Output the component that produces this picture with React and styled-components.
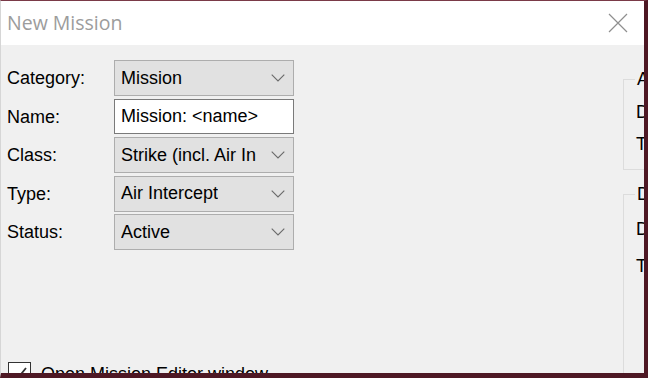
import React from 'react'
import styled, { createGlobalStyle } from 'styled-components'

const GlobalStyle = createGlobalStyle`
  html, body {
    margin: 0;
    padding: 0;
    background: #f0f0f0;
  }
  * {
    box-sizing: border-box;
  }
`

const Window = styled.div`
  width: 648px;
  height: 378px;
  display: flex;
  flex-direction: column;
  border-top: 1px solid #7a3a48;
  border-left: 1px solid #d6d6d6;
  border-right: 4px solid #4e1824;
  border-bottom: 5px solid #4e1824;
  background: #f0f0f0;
  overflow: hidden;
  font-family: "Liberation Sans", Arial, sans-serif;
  font-size: 18px;
  color: #000;
`

const TitleBar = styled.div`
  height: 44px;
  flex-shrink: 0;
  background: #fff;
  display: flex;
  align-items: center;
  justify-content: space-between;
  padding: 0 16px 0 6px;
`

const Title = styled.div`
  font-family: "Open Sans", "Liberation Sans", sans-serif;
  font-size: 19.5px;
  color: #9c9c9c;
  margin-top: -1px;
`

const Body = styled.div`
  flex: 1;
  display: flex;
  min-height: 0;
  overflow: hidden;
`

const LeftPane = styled.div`
  flex: 1;
  display: flex;
  flex-direction: column;
  padding: 15px 0 0 6px;
`

const Form = styled.div`
  display: grid;
  grid-template-columns: 107px 180px;
  grid-auto-rows: 36px;
  row-gap: 2.5px;
  align-items: center;
`

const Label = styled.div`
  line-height: 36px;
`

const Combo = styled.div`
  height: 36px;
  border: 1px solid #adadad;
  background: #e1e1e1;
  display: flex;
  align-items: center;
  justify-content: space-between;
  padding: 0 8px 0 6px;
  white-space: nowrap;
  overflow: hidden;

  span {
    overflow: hidden;
    margin-right: 6px;
  }
`

const TextBox = styled.div`
  height: 35px;
  border: 1px solid #7a7a7a;
  background: #fff;
  display: flex;
  align-items: center;
  padding: 0 6px;
  white-space: nowrap;
`

const CheckRow = styled.div`
  margin-top: auto;
  margin-bottom: -14px;
  display: flex;
  align-items: flex-start;
  gap: 10px;
  padding-left: 1px;
  height: 25px;
`

const CheckBox = styled.div`
  width: 23px;
  height: 23px;
  flex-shrink: 0;
  border: 1px solid #333;
  background: #fff;
  display: flex;
  align-items: center;
  justify-content: center;
`

const CheckText = styled.span`
  line-height: 23px;
  margin-top: 1px;
`

const RightPane = styled.div`
  width: 21px;
  flex-shrink: 0;
  display: flex;
  flex-direction: column;
  gap: 24px;
  padding-top: 34px;
  overflow: hidden;
`

const Group = styled.div`
  position: relative;
  width: 220px;
  height: ${(p) => p.$h}px;
  flex-shrink: 0;
  border: 1px solid #dcdcdc;
  border-bottom: ${(p) => (p.$open ? 'none' : '1px solid #dcdcdc')};
  padding: ${(p) => p.$top}px 0 0 12px;
  display: flex;
  flex-direction: column;
  gap: ${(p) => p.$gap}px;
  line-height: 20px;
`

const GroupTitle = styled.div`
  position: absolute;
  top: -11px;
  left: 11px;
  padding: 0 2px;
  background: #f0f0f0;
  line-height: 20px;
`

const Chevron = () => (
  <svg width="14" height="8" viewBox="0 0 14 8">
    <path d="M0.7 0.7 L7 7 L13.3 0.7" fill="none" stroke="#6a6a6a" strokeWidth="1.1" />
  </svg>
)

const CloseIcon = () => (
  <svg width="20" height="20" viewBox="0 0 20 20">
    <path d="M1 1 L19 19 M19 1 L1 19" stroke="#8f8f8f" strokeWidth="1.2" />
  </svg>
)

const CheckMark = () => (
  <svg width="19" height="19" viewBox="0 0 19 19">
    <path d="M3 10 L7.5 14.5 L16 4" fill="none" stroke="#333" strokeWidth="1.8" />
  </svg>
)

const fields = [
  { label: 'Category:', value: 'Mission', kind: 'combo' },
  { label: 'Name:', value: 'Mission: <name>', kind: 'text' },
  { label: 'Class:', value: 'Strike (incl. Air In', kind: 'combo' },
  { label: 'Type:', value: 'Air Intercept', kind: 'combo' },
  { label: 'Status:', value: 'Active', kind: 'combo' },
]

const App = () => {
  return (
    <>
      <GlobalStyle />
      <Window>
        <TitleBar>
          <Title>New Mission</Title>
          <CloseIcon />
        </TitleBar>
        <Body>
          <LeftPane>
            <Form>
              {fields.map((f) => (
                <React.Fragment key={f.label}>
                  <Label>{f.label}</Label>
                  {f.kind === 'combo' ? (
                    <Combo>
                      <span>{f.value}</span>
                      <Chevron />
                    </Combo>
                  ) : (
                    <TextBox>{f.value}</TextBox>
                  )}
                </React.Fragment>
              ))}
            </Form>
            <CheckRow>
              <CheckBox>
                <CheckMark />
              </CheckBox>
              <CheckText>Open Mission Editor window</CheckText>
            </CheckRow>
          </LeftPane>
          <RightPane>
            <Group $h={91} $top={22} $gap={12}>
              <GroupTitle>Area</GroupTitle>
              <div>Date</div>
              <div>Time</div>
            </Group>
            <Group $h={200} $top={24} $gap={17} $open>
              <GroupTitle>Duration</GroupTitle>
              <div>Date</div>
              <div>Time</div>
            </Group>
          </RightPane>
        </Body>
      </Window>
    </>
  )
}

export default App
